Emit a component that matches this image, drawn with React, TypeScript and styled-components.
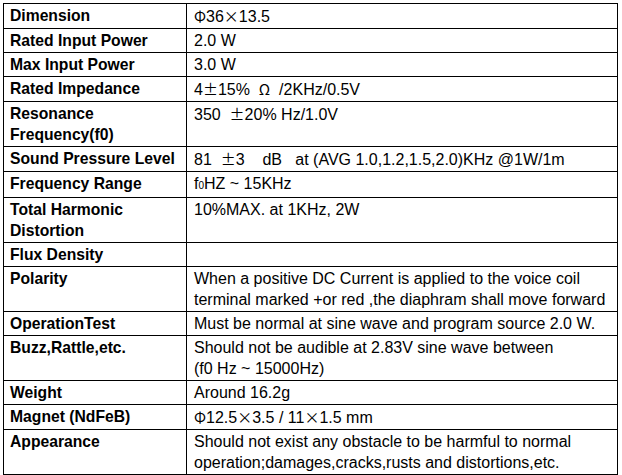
import React from 'react';
import styled, { createGlobalStyle } from 'styled-components';

const GlobalStyle = createGlobalStyle`
  body {
    margin: 0;
    background: #fff;
    font-family: "Liberation Sans", Arial, sans-serif;
    color: #000;
  }
`;

const Page = styled.div`
  padding: 3px 0 0 3px;
  height: 475px;
  overflow: hidden;
  box-sizing: border-box;
`;

const SpecTable = styled.table`
  border-collapse: collapse;
  table-layout: fixed;
  width: 615px;
`;

const LabelCell = styled.td`
  width: 176px;
  border: 1px solid #000;
  padding: 1px 0 1px 6px;
  font-weight: bold;
  font-size: 15.7px;
  line-height: 21px;
  vertical-align: top;
  white-space: nowrap;
`;

const ValueCell = styled.td`
  border: 1px solid #000;
  padding: 1px 0 1px 7px;
  font-size: 16px;
  line-height: 21px;
  vertical-align: top;
  white-space: pre;
`;

const EmptyRow = styled.tr`
  height: 30px;
`;

// symbols drawn from the CJK font, as in the source document
const Sym = styled.span`
  font-family: "Noto Sans CJK SC", sans-serif;
  font-size: 15px;
`;

const SmallZero = styled.span`
  font-size: 10px;
`;

type Spec = { label: React.ReactNode; value: React.ReactNode };

const SPECS: Spec[] = [
  { label: 'Dimension', value: <><Sym>Φ</Sym>36<Sym>×</Sym>13.5</> },
  { label: 'Rated Input Power', value: '2.0 W' },
  { label: 'Max Input Power', value: '3.0 W' },
  { label: 'Rated Impedance', value: <>4<Sym>±</Sym>15%  <Sym>Ω</Sym>  /2KHz/0.5V</> },
  { label: <>Resonance<br />Frequency(f0)</>, value: <>350  <Sym>±</Sym>20% Hz/1.0V</> },
  { label: 'Sound Pressure Level', value: <>81  <Sym>±</Sym>3    dB   at (AVG 1.0,1.2,1.5,2.0)KHz @1W/1m</> },
  { label: 'Frequency Range', value: <>f<SmallZero>0</SmallZero>HZ ~ 15KHz</> },
  { label: <>Total Harmonic<br />Distortion</>, value: '10%MAX. at 1KHz, 2W' },
  { label: 'Flux Density', value: '' },
  {
    label: 'Polarity',
    value: <>When a positive DC Current is applied to the voice coil<br />terminal marked +or red ,the diaphram shall move forward</>,
  },
  { label: 'OperationTest', value: 'Must be normal at sine wave and program source 2.0 W.' },
  {
    label: 'Buzz,Rattle,etc.',
    value: <>Should not be audible at 2.83V sine wave between<br />(f0 Hz ~ 15000Hz)</>,
  },
  { label: 'Weight', value: 'Around 16.2g' },
  { label: 'Magnet (NdFeB)', value: <><Sym>Φ</Sym>12.5<Sym>×</Sym>3.5 / 11<Sym>×</Sym>1.5 mm</> },
  {
    label: 'Appearance',
    value: <>Should not exist any obstacle to be harmful to normal<br />operation;damages,cracks,rusts and distortions,etc.</>,
  },
];

const App = () => {
  return (
    <Page>
      <GlobalStyle />
      <SpecTable>
        <tbody>
          {SPECS.map((spec, i) => (
            <tr key={i}>
              <LabelCell>{spec.label}</LabelCell>
              <ValueCell>{spec.value}</ValueCell>
            </tr>
          ))}
          <EmptyRow>
            <LabelCell />
            <ValueCell />
          </EmptyRow>
        </tbody>
      </SpecTable>
    </Page>
  );
};

export default App;
